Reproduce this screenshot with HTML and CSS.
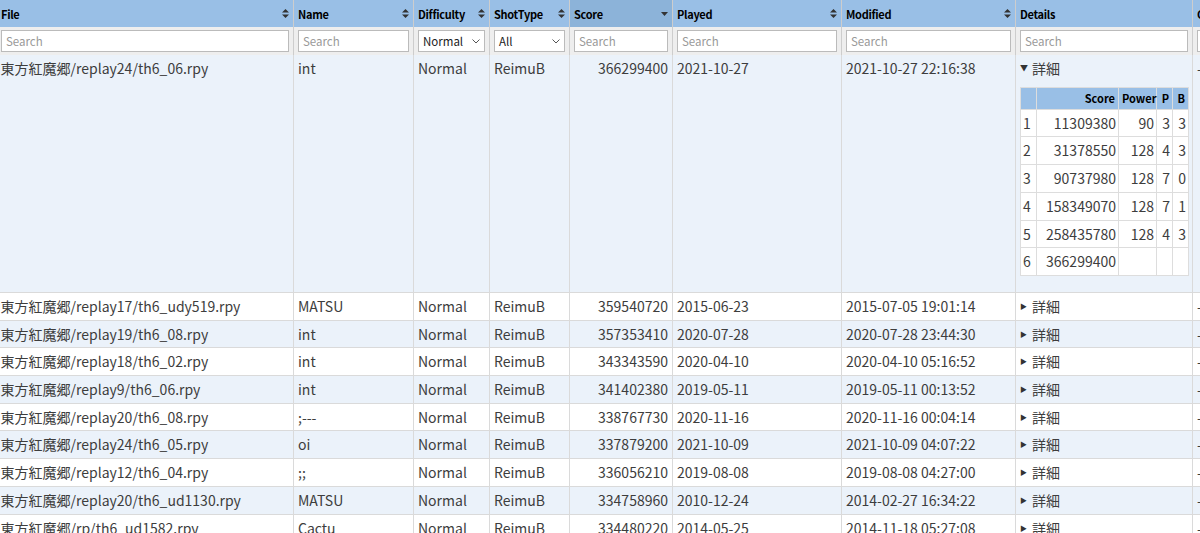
FILE: index.html
```html
<!doctype html>
<html lang="ja">
<head>
    <meta charset="utf-8">
    <title>Replays</title>
    <link rel="stylesheet" href="styles.css">
</head>
<body>
    <table class="replays">
        <colgroup>
            <col class="c-file"><col class="c-name"><col class="c-diff"><col class="c-shot">
            <col class="c-score"><col class="c-played"><col class="c-mod"><col class="c-details"><col class="c-comment">
        </colgroup>
        <thead>
            <tr class="heads">
                <th><div class="hd">File<span class="sort"><svg width="7" height="9" viewBox="0 0 7 9"><path d="M3.5 0L7 3.5H0z M3.5 9L0 5.5H7z"/></svg></span></div></th>
                <th><div class="hd">Name<span class="sort"><svg width="7" height="9" viewBox="0 0 7 9"><path d="M3.5 0L7 3.5H0z M3.5 9L0 5.5H7z"/></svg></span></div></th>
                <th><div class="hd">Difficulty<span class="sort"><svg width="7" height="9" viewBox="0 0 7 9"><path d="M3.5 0L7 3.5H0z M3.5 9L0 5.5H7z"/></svg></span></div></th>
                <th><div class="hd">ShotType<span class="sort"><svg width="7" height="9" viewBox="0 0 7 9"><path d="M3.5 0L7 3.5H0z M3.5 9L0 5.5H7z"/></svg></span></div></th>
                <th class="sorted"><div class="hd">Score<span class="sort"><svg width="7" height="9" viewBox="0 0 7 9"><path d="M0 3H7L3.5 7z"/></svg></span></div></th>
                <th><div class="hd">Played<span class="sort"><svg width="7" height="9" viewBox="0 0 7 9"><path d="M3.5 0L7 3.5H0z M3.5 9L0 5.5H7z"/></svg></span></div></th>
                <th><div class="hd">Modified<span class="sort"><svg width="7" height="9" viewBox="0 0 7 9"><path d="M3.5 0L7 3.5H0z M3.5 9L0 5.5H7z"/></svg></span></div></th>
                <th><div class="hd">Details</div></th>
                <th><div class="hd">Comment</div></th>
            </tr>
            <tr class="filters">
                <td><input type="search" placeholder="Search"></td>
                <td><input type="search" placeholder="Search"></td>
                <td><div class="sel">Normal<svg width="8" height="5" viewBox="0 0 8 5"><path d="M0.5 0.5L4 4L7.5 0.5" fill="none" stroke="#555" stroke-width="1"/></svg></div></td>
                <td><div class="sel">All<svg width="8" height="5" viewBox="0 0 8 5"><path d="M0.5 0.5L4 4L7.5 0.5" fill="none" stroke="#555" stroke-width="1"/></svg></div></td>
                <td><input type="search" placeholder="Search"></td>
                <td><input type="search" placeholder="Search"></td>
                <td><input type="search" placeholder="Search"></td>
                <td><input type="search" placeholder="Search"></td>
                <td><input type="search" placeholder="Search"></td>
            </tr>
        </thead>
        <tbody>
            <tr class="odd open">
                <td>東方紅魔郷/replay24/th6_06.rpy</td><td>int</td><td>Normal</td><td>ReimuB</td>
                <td class="num">366299400</td><td>2021-10-27</td><td>2021-10-27 22:16:38</td>
                <td>
                    <div class="summary"><span class="tri down">&#9660;</span>詳細</div>
                    <table class="stages">
                        <colgroup><col class="s-i"><col class="s-score"><col class="s-power"><col class="s-p"><col class="s-b"></colgroup>
                        <thead><tr><th></th><th>Score</th><th>Power</th><th>P</th><th>B</th></tr></thead>
                        <tbody>
                            <tr><td>1</td><td>11309380</td><td>90</td><td>3</td><td>3</td></tr>
                            <tr><td>2</td><td>31378550</td><td>128</td><td>4</td><td>3</td></tr>
                            <tr><td>3</td><td>90737980</td><td>128</td><td>7</td><td>0</td></tr>
                            <tr><td>4</td><td>158349070</td><td>128</td><td>7</td><td>1</td></tr>
                            <tr><td>5</td><td>258435780</td><td>128</td><td>4</td><td>3</td></tr>
                            <tr><td>6</td><td>366299400</td><td></td><td></td><td></td></tr>
                        </tbody>
                    </table>
                </td>
                <td>-</td>
            </tr>
            <tr>
                <td>東方紅魔郷/replay17/th6_udy519.rpy</td><td>MATSU</td><td>Normal</td><td>ReimuB</td>
                <td class="num">359540720</td><td>2015-06-23</td><td>2015-07-05 19:01:14</td>
                <td><div class="summary"><span class="tri">&#9654;</span>詳細</div></td><td>-</td>
            </tr>
            <tr class="odd">
                <td>東方紅魔郷/replay19/th6_08.rpy</td><td>int</td><td>Normal</td><td>ReimuB</td>
                <td class="num">357353410</td><td>2020-07-28</td><td>2020-07-28 23:44:30</td>
                <td><div class="summary"><span class="tri">&#9654;</span>詳細</div></td><td>-</td>
            </tr>
            <tr>
                <td>東方紅魔郷/replay18/th6_02.rpy</td><td>int</td><td>Normal</td><td>ReimuB</td>
                <td class="num">343343590</td><td>2020-04-10</td><td>2020-04-10 05:16:52</td>
                <td><div class="summary"><span class="tri">&#9654;</span>詳細</div></td><td>-</td>
            </tr>
            <tr class="odd">
                <td>東方紅魔郷/replay9/th6_06.rpy</td><td>int</td><td>Normal</td><td>ReimuB</td>
                <td class="num">341402380</td><td>2019-05-11</td><td>2019-05-11 00:13:52</td>
                <td><div class="summary"><span class="tri">&#9654;</span>詳細</div></td><td>-</td>
            </tr>
            <tr>
                <td>東方紅魔郷/replay20/th6_08.rpy</td><td>;---</td><td>Normal</td><td>ReimuB</td>
                <td class="num">338767730</td><td>2020-11-16</td><td>2020-11-16 00:04:14</td>
                <td><div class="summary"><span class="tri">&#9654;</span>詳細</div></td><td>-</td>
            </tr>
            <tr class="odd">
                <td>東方紅魔郷/replay24/th6_05.rpy</td><td>oi</td><td>Normal</td><td>ReimuB</td>
                <td class="num">337879200</td><td>2021-10-09</td><td>2021-10-09 04:07:22</td>
                <td><div class="summary"><span class="tri">&#9654;</span>詳細</div></td><td>-</td>
            </tr>
            <tr>
                <td>東方紅魔郷/replay12/th6_04.rpy</td><td>;;</td><td>Normal</td><td>ReimuB</td>
                <td class="num">336056210</td><td>2019-08-08</td><td>2019-08-08 04:27:00</td>
                <td><div class="summary"><span class="tri">&#9654;</span>詳細</div></td><td>-</td>
            </tr>
            <tr class="odd">
                <td>東方紅魔郷/replay20/th6_ud1130.rpy</td><td>MATSU</td><td>Normal</td><td>ReimuB</td>
                <td class="num">334758960</td><td>2010-12-24</td><td>2014-02-27 16:34:22</td>
                <td><div class="summary"><span class="tri">&#9654;</span>詳細</div></td><td>-</td>
            </tr>
            <tr>
                <td>東方紅魔郷/rp/th6_ud1582.rpy</td><td>Cactu</td><td>Normal</td><td>ReimuB</td>
                <td class="num">334480220</td><td>2014-05-25</td><td>2014-11-18 05:27:08</td>
                <td><div class="summary"><span class="tri">&#9654;</span>詳細</div></td><td>-</td>
            </tr>
        </tbody>
    </table>
</body>
</html>
```

FILE: styles.css
```css
*,
*::after,
*::before {
  box-sizing: border-box;
}

body {
  margin: 0;
  background: #fff;
  overflow: hidden;
  font-family: "Noto Sans CJK JP", "Noto Sans", sans-serif;
  color: #3d3d3d;
}

.replays {
  table-layout: fixed;
  width: 1297px;
  margin-left: -4px;
  border-collapse: collapse;
  font-size: 14px;
}

.c-file { width: 297px; }
.c-name { width: 120px; }
.c-diff { width: 76px; }
.c-shot { width: 80px; }
.c-score { width: 103px; }
.c-played { width: 169px; }
.c-mod { width: 174px; }
.c-details { width: 177px; }
.c-comment { width: 101px; }

.heads th {
  background: #99bfe6;
  color: #000;
  font-size: 11px;
  font-weight: bold;
  letter-spacing: -0.3px;
  text-align: left;
  height: 27px;
  padding: 0 4px;
  border-left: 1px solid #cdcdcd;
}

.heads th.sorted {
  background: #8cb3d9;
}

.hd {
  display: flex;
  align-items: center;
  justify-content: space-between;
  white-space: nowrap;
  overflow: hidden;
}

.sort svg {
  display: block;
  fill: #333;
}

.filters td {
  background: #eee;
  height: 28px;
  padding: 3px 4px;
  border-left: 1px solid #cdcdcd;
}

.filters input,
.sel {
  display: flex;
  width: 100%;
  height: 22px;
  border: 1px solid #bbb;
  background: #fff;
  font: 11.5px "Noto Sans CJK JP", sans-serif;
  padding: 0 4px;
  color: #333;
}

.filters input::placeholder {
  color: #999;
}

.sel {
  align-items: center;
  justify-content: space-between;
  color: #222;
}

tbody td {
  padding: 4px;
  line-height: 18.7px;
  vertical-align: top;
  white-space: nowrap;
  overflow: hidden;
  border-left: 1px solid #dadada;
  border-bottom: 1px solid #dadada;
  background: #fff;
}

.replays > tbody > tr.odd > td {
  background: #ebf2fa;
}

.replays > tbody > tr > td:first-child {
  border-left: 0;
}

.num {
  text-align: right;
}

.summary {
  display: flex;
  align-items: center;
}

.tri {
  font-size: 7px;
  width: 12px;
  color: #333;
}

.tri.down {
  font-size: 8px;
}

.stages {
  table-layout: fixed;
  width: 168px;
  margin: 9px 0 12px;
  border-collapse: collapse;
}

.s-i { width: 16px; }
.s-score { width: 82px; }
.s-power { width: 38px; }
.s-p { width: 16px; }
.s-b { width: 16px; }

.stages th {
  background: #99bfe6;
  color: #000;
  font-size: 11px;
  height: 22px;
  text-align: right;
  padding: 0 3px;
  border: 1px solid #ddd;
}

.stages td {
  background: #fff;
  border: 1px solid #ddd;
  padding: 4px 2px;
  text-align: right;
}

.stages td:first-child {
  text-align: left;
  border-left: 1px solid #ddd;
}
```
